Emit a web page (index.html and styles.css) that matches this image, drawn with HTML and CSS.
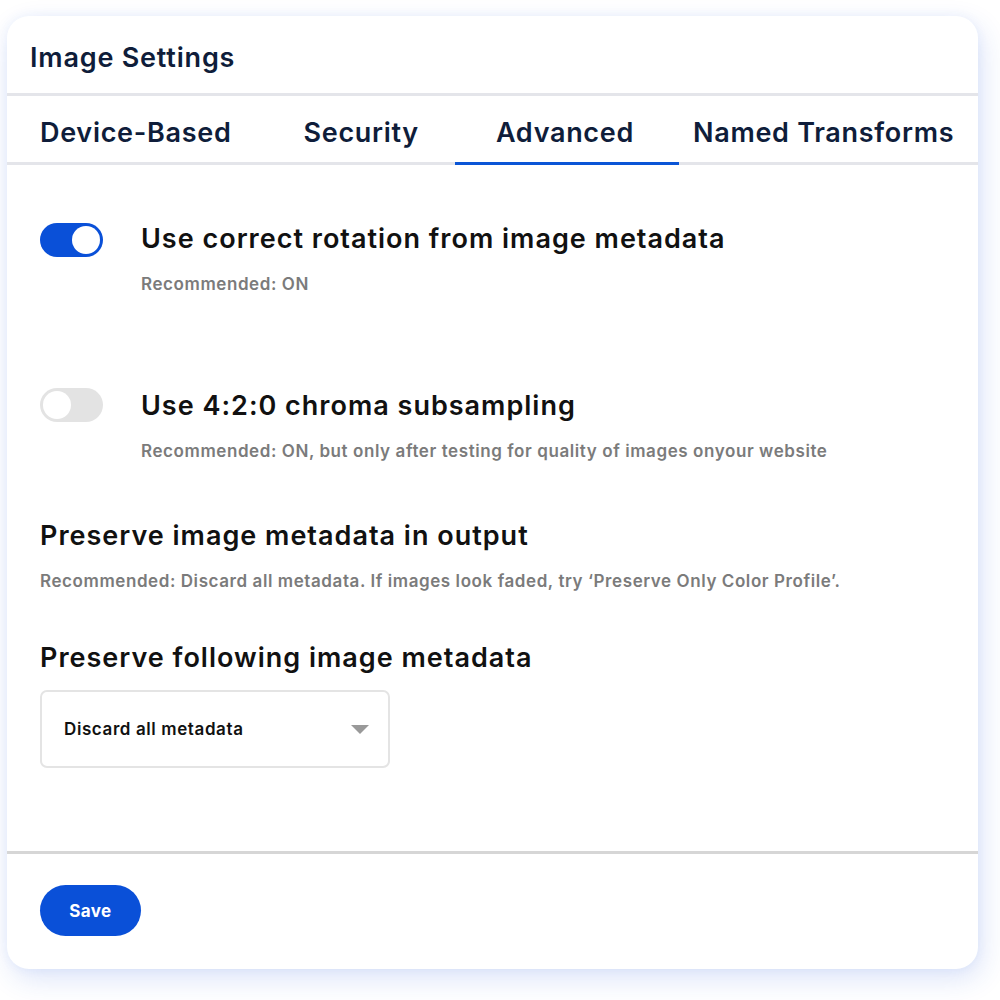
FILE: index.html
```html
<!DOCTYPE html>
<html>
<head>
<meta charset="utf-8">
<link rel="stylesheet" href="styles.css">
</head>
<body>
<div class="card">
  <div class="card-title">Image Settings</div>
  <div class="tabs">
    <div class="tab tab-first">Device-Based</div>
    <div class="tab">Security</div>
    <div class="tab active">Advanced</div>
    <div class="tab tab-last">Named Transforms</div>
  </div>
  <div class="content">
    <div class="setting">
      <div class="toggle on"><span class="knob"></span></div>
      <div class="setting-text">
        <div class="heading">Use correct rotation from image metadata</div>
        <div class="hint">Recommended: ON</div>
      </div>
    </div>
    <div class="setting setting-second">
      <div class="toggle off"><span class="knob"></span></div>
      <div class="setting-text">
        <div class="heading">Use 4:2:0 chroma subsampling</div>
        <div class="hint">Recommended: ON, but only after testing for quality of images onyour website</div>
      </div>
    </div>
    <div class="block">
      <div class="heading">Preserve image metadata in output</div>
      <div class="hint">Recommended: Discard all metadata. If images look faded, try ‘Preserve Only Color Profile’.</div>
    </div>
    <div class="block block-select">
      <div class="heading">Preserve following image metadata</div>
      <div class="select">
        <span class="select-value">Discard all metadata</span>
        <span class="caret"></span>
      </div>
    </div>
  </div>
  <div class="footer">
    <button class="save">Save</button>
  </div>
</div>
</body>
</html>
```
FILE: styles.css
```css
* { box-sizing: border-box; }
html, body { margin: 0; padding: 0; background: #ffffff; }
body {
  font-family: "Inter", "Noto Sans", sans-serif;
  width: 1000px;
  height: 1000px;
  padding: 16px 22px 0 7px;
}
.card {
  width: 971px;
  height: 953px;
  background: #fff;
  border-radius: 22px;
  box-shadow: 4px 10px 28px rgba(40, 90, 220, 0.16), 0 0 12px rgba(40, 90, 220, 0.06);
  display: flex;
  flex-direction: column;
  overflow: hidden;
}
.card-title {
  height: 80px;
  padding: 25px 0 0 23px;
  font-size: 27px;
  font-weight: 600;
  color: #0f1d3a;
  letter-spacing: 0.8px;
  border-bottom: 3px solid #e4e5ea;
}
.tabs {
  display: flex;
  height: 69px;
  border-bottom: 3px solid #e4e5ea;
  padding-left: 33px;
}
.tab {
  font-size: 27px;
  font-weight: 600;
  color: #0f1d3a;
  letter-spacing: 0.7px;
  padding: 20px 36px 0;
  height: 69px;
  white-space: nowrap;
}
.tab-first { padding-left: 0; }
.tab-last { padding-left: 14px; }
.tab.active {
  border-bottom: 3px solid #0a55d6;
  padding-left: 41px;
  padding-right: 45px;
}
.content {
  flex: 1;
  padding: 57px 0 0 33px;
}
.setting {
  display: flex;
  gap: 38px;
}
.setting-second { margin-top: 95px; }
.toggle {
  width: 63px;
  height: 34px;
  border-radius: 17px;
  position: relative;
  flex-shrink: 0;
  margin-top: 1px;
}
.setting-second .toggle { margin-top: -1px; }
.toggle.on { background: #0a50d8; }
.toggle.off { background: #e3e3e3; }
.knob {
  position: absolute;
  top: 3px;
  width: 28px;
  height: 28px;
  border-radius: 50%;
  background: #fff;
}
.toggle.on .knob { right: 3px; }
.toggle.off .knob { left: 3px; }
.heading {
  font-size: 27px;
  font-weight: 600;
  color: #111;
  line-height: 34px;
  letter-spacing: 1px;
}
.hint {
  font-size: 17px;
  font-weight: 600;
  color: #7b7b7b;
  margin-top: 18px;
  letter-spacing: 0.58px;
}
.block { margin-top: 58px; }
.block-select { margin-top: 50px; }
.select {
  margin-top: 15px;
  width: 350px;
  height: 78px;
  border: 2px solid #e4e4e4;
  border-radius: 7px;
  display: flex;
  align-items: center;
  justify-content: space-between;
  padding: 0 19px 0 22px;
}
.select-value {
  font-size: 17px;
  font-weight: 600;
  color: #111;
  letter-spacing: 0.6px;
}
.caret {
  width: 0;
  height: 0;
  border-left: 9px solid transparent;
  border-right: 9px solid transparent;
  border-top: 9px solid #999;
}
.footer {
  height: 118px;
  border-top: 3px solid #d6d6d6;
  padding: 31px 0 0 33px;
}
.save {
  width: 101px;
  height: 51px;
  border: none;
  border-radius: 26px;
  background: #0a50d8;
  color: #fff;
  font-family: inherit;
  font-size: 17px;
  font-weight: 700;
  letter-spacing: 0.4px;
}
```
